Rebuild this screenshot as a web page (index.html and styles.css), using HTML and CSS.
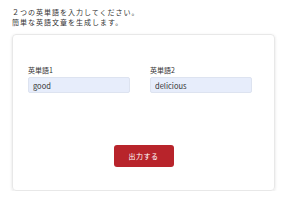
FILE: index.html
```html
<!DOCTYPE html>
<html lang="ja">
<head>
  <meta charset="UTF-8">
  <title>英文生成</title>
  <link rel="stylesheet" href="styles.css">
</head>
<body>

  <div class="intro">
    <p>２つの英単語を入力してください。</p>
    <p>簡単な英語文章を生成します。</p>
  </div>

  <div class="card">
    <div class="fields">
      <div class="field">
        <label for="word1">英単語1</label>
        <input id="word1" type="text" value="good">
      </div>
      <div class="field">
        <label for="word2">英単語2</label>
        <input id="word2" type="text" value="delicious">
      </div>
    </div>

    <button class="submit-btn">出力する</button>
  </div>

</body>
</html>
```

FILE: styles.css
```css
body {
  font-family: "Noto Sans CJK JP", "Noto Sans", sans-serif;
  background-color: white;
  color: #333;
  margin: 0;
  padding: 0 10px 0 12px;
}

.intro {
  padding-top: 7px;
}

.intro p {
  margin: 0;
  font-size: 7px;
  line-height: 10px;
  letter-spacing: 1px;
}

.card {
  margin-top: 7px;
  width: 263px;
  box-sizing: border-box;
  border: 1px solid #e8e8e8;
  border-radius: 4px;
  box-shadow: 0 1px 3px rgba(0,0,0,0.12);
  padding: 30px 15px 23px;
  display: flex;
  flex-direction: column;
  align-items: center;
}

.fields {
  display: flex;
  gap: 20px;
  align-self: stretch;
}

.field {
  width: 102px;
  display: flex;
  flex-direction: column;
  gap: 2px;
}

.field label {
  font-size: 7px;
  line-height: 10px;
}

.field input {
  box-sizing: border-box;
  width: 102px;
  height: 16px;
  margin: 0;
  padding: 0 4px;
  font-family: inherit;
  font-size: 7.5px;
  color: #333;
  background-color: #e7edfb;
  border: 1px solid #dde3f0;
  border-radius: 2px;
}

.submit-btn {
  margin-top: 52px;
  width: 60px;
  height: 22px;
  padding: 0;
  background-color: #b8242b;
  color: white;
  border: none;
  border-radius: 3px;
  font-family: inherit;
  font-size: 7px;
  letter-spacing: 0.5px;
}
```
